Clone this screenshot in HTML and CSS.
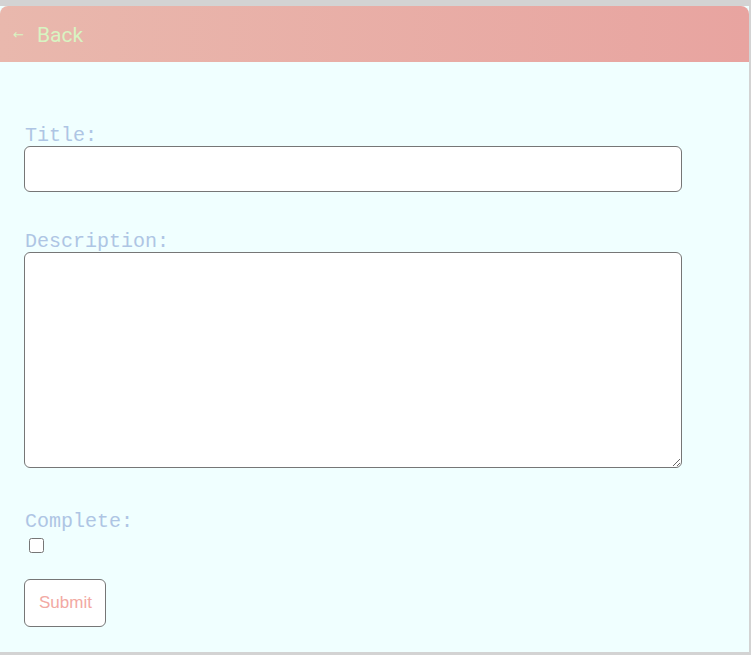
FILE: index.html
```html
<!DOCTYPE html>
<html>
<head>
<meta charset="utf-8">
<link rel="stylesheet" href="styles.css">
</head>
<body>
<div class="card">
  <header class="topbar">
    <a class="back" href="#"><span class="arrow">←</span>Back</a>
  </header>
  <form class="form">
    <label class="label" for="title">Title:</label>
    <input class="field" id="title" type="text">
    <label class="label label-gap" for="desc">Description:</label>
    <textarea class="field area" id="desc"></textarea>
    <label class="label label-gap2" for="done">Complete:</label>
    <input class="check" id="done" type="checkbox">
    <button class="submit" type="button">Submit</button>
  </form>
</div>
</body>
</html>
```

FILE: styles.css
```css
html, body {
  margin: 0;
  padding: 0;
}
body {
  background: #d3d3d3;
  padding: 6px 2px 3px 0;
  width: 751px;
  height: 655px;
  box-sizing: border-box;
}
.card {
  width: 749px;
  height: 646px;
  background: #f0ffff;
  display: flex;
  flex-direction: column;
}
.topbar {
  height: 56px;
  background: linear-gradient(to right, #e9b8ad, #e8a4a0);
  border-radius: 8px 8px 0 0;
  display: flex;
  align-items: center;
  padding-left: 13px;
}
.back {
  font-family: Roboto, "Liberation Sans", sans-serif;
  font-size: 21px;
  color: #d8f4c2;
  text-decoration: none;
  display: flex;
  align-items: center;
  margin-top: 1px;
}
.arrow {
  font-family: "DejaVu Sans", sans-serif;
  font-size: 13px;
  margin-right: 13px;
}
.form {
  display: flex;
  flex-direction: column;
  align-items: flex-start;
  padding: 63px 0 0 24px;
}
.label {
  font-family: "Liberation Mono", "DejaVu Sans Mono", monospace;
  font-size: 20px;
  line-height: 21px;
  color: #aec5e4;
  padding-left: 1px;
}
.label-gap {
  margin-top: 39px;
}
.label-gap2 {
  margin-top: 43px;
}
.field {
  width: 658px;
  height: 46px;
  box-sizing: border-box;
  border: 1px solid #767676;
  border-radius: 6px;
  background: #fff;
  margin: 0;
  padding: 2px 4px;
}
.area {
  height: 216px;
  resize: vertical;
}
.check {
  width: 15px;
  height: 15px;
  margin: 6px 0 0 5px;
}
.submit {
  margin-top: 26px;
  width: 82px;
  height: 48px;
  background: #fff;
  border: 1px solid #767676;
  border-radius: 6px;
  font-family: "Liberation Sans", Arial, sans-serif;
  font-size: 17px;
  color: #f2a9a3;
  padding: 0 0 0 1px;
}
```
